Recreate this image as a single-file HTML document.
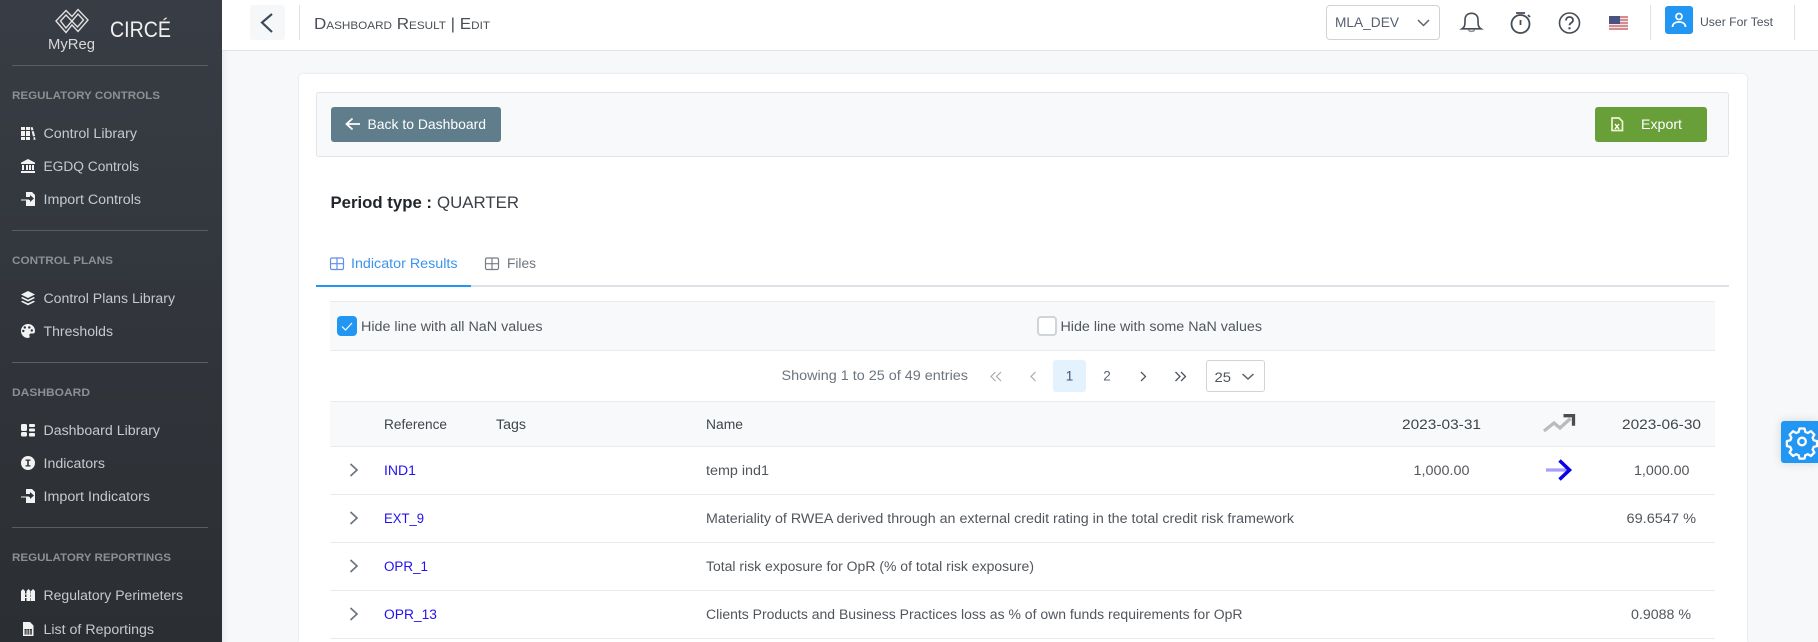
<!DOCTYPE html>
<html><head><meta charset="utf-8"><title>Dashboard Result</title>
<style>
html,body{margin:0;padding:0;width:1818px;height:642px;overflow:hidden;background:#f7f8fa}
#root{position:absolute;left:0;top:0;width:1818px;height:642px;overflow:hidden;background:#f7f8fa}
.a{position:absolute;box-sizing:border-box}
svg{position:absolute;left:0;top:0}
text{font-family:"Liberation Sans",sans-serif}
.s{fill:#c6c9cd;font-size:13.5px}
.h{fill:#8c8f94;font-size:11px;font-weight:bold}
.t{fill:#51565c;font-size:13.5px}
.d{fill:#3f454b;font-size:13.5px}
.l{fill:#2410ee;font-size:13.5px}
.w{fill:#fff;font-size:14px}
</style></head><body>
<div id="root">
<div class="a" style="left:0;top:0;width:222px;height:642px;background:linear-gradient(#383d45,#2b2e32)"></div>
<div class="a" style="left:222px;top:0;width:7px;height:642px;background:linear-gradient(90deg,#eceef1,#f7f8fa)"></div>
<div class="a" style="left:222px;top:0;width:1596px;height:51px;background:#fff;border-bottom:1px solid #dfe2e8"></div>
<div class="a" style="left:250px;top:5px;width:35px;height:35px;background:#f6f7f9;border-radius:3px"></div>
<div class="a" style="left:299px;top:5px;width:1px;height:35px;background:#dfe2e6"></div>
<div class="a" style="left:1326px;top:5px;width:114px;height:35px;border:1px solid #cfd2d6;border-radius:4px;background:#fff"></div>
<div class="a" style="left:1650px;top:5px;width:1px;height:35px;background:#dfe2e6"></div>
<div class="a" style="left:1794px;top:5px;width:1px;height:35px;background:#dfe2e6"></div>
<div class="a" style="left:1665px;top:6px;width:28px;height:28px;background:#2196f3;border-radius:3px"></div>

<div class="a" style="left:299px;top:74px;width:1448px;height:568px;background:#fff;border-radius:4px 4px 0 0;box-shadow:0 0 2px rgba(0,0,0,.12)"></div>
<div class="a" style="left:316px;top:92px;width:1413px;height:65px;background:#f8f9fa;border:1px solid #e1e4e8;border-radius:3px"></div>
<div class="a" style="left:331px;top:107px;width:170px;height:35px;background:#607d8b;border-radius:3px"></div>
<div class="a" style="left:1595px;top:107px;width:112px;height:35px;background:#689f38;border-radius:3px"></div>

<div class="a" style="left:316px;top:285px;width:1413px;height:2px;background:#dee2e6"></div>
<div class="a" style="left:316px;top:285px;width:155px;height:2px;background:#2196f3"></div>

<div class="a" style="left:330px;top:301px;width:1385px;height:50px;background:#f8f9fa;border-top:1px solid #e9ecef;border-bottom:1px solid #e9ecef"></div>
<div class="a" style="left:337px;top:316px;width:20px;height:20px;background:#2196f3;border-radius:4px"></div>
<div class="a" style="left:1037px;top:316px;width:20px;height:20px;background:#fff;border:2px solid #ced4da;border-radius:4px"></div>
<div class="a" style="left:1053px;top:360px;width:33px;height:32px;background:#e3f2fd;border-radius:3px"></div>
<div class="a" style="left:1206px;top:360px;width:59px;height:32px;background:#fff;border:1px solid #ced4da;border-radius:3px"></div>
<div class="a" style="left:330px;top:401px;width:1385px;height:46px;background:#f8f9fa;border-top:1px solid #e9ecef;border-bottom:1px solid #e9ecef"></div>
<div class="a" style="left:330px;top:494px;width:1385px;height:1px;background:#e9ecef"></div>
<div class="a" style="left:330px;top:542px;width:1385px;height:1px;background:#e9ecef"></div>
<div class="a" style="left:330px;top:590px;width:1385px;height:1px;background:#e9ecef"></div>
<div class="a" style="left:330px;top:638px;width:1385px;height:1px;background:#e9ecef"></div>
<div class="a" style="left:1781px;top:421px;width:37px;height:42px;background:#2196f3;border-radius:3px 0 0 3px;box-shadow:0 0 10px rgba(0,0,0,.14)"></div>

<svg width="1818" height="642" viewBox="0 0 1818 642" xmlns="http://www.w3.org/2000/svg">
<!-- sidebar logo -->
<g fill="none" stroke="#e0e0e0" stroke-width="1.400">
<path d="M56 21L66 10.500 72 16.500 78 9.500 88 20 78 31.500 72 25 66 32.500Z"/>
<path d="M60.500 21L66 15 77.500 27 83.500 20 78 14 66 28Z"/>
</g>
<text x="48" y="49" font-size="15" fill="#d8d8d8" textLength="47" lengthAdjust="spacingAndGlyphs">MyReg</text>
<text x="110" y="37" font-size="22" fill="#f0f0f0" textLength="61" lengthAdjust="spacingAndGlyphs">CIRCÉ</text>
<g stroke="#5a5e63" stroke-width="1"><path d="M12 65.500H208M12 230.500H208M12 362.500H208M12 527.500H208"/></g>

<text class="h" x="12" y="99" textLength="148" lengthAdjust="spacingAndGlyphs">REGULATORY CONTROLS</text>
<text class="h" x="12" y="264" textLength="101" lengthAdjust="spacingAndGlyphs">CONTROL PLANS</text>
<text class="h" x="12" y="396" textLength="78" lengthAdjust="spacingAndGlyphs">DASHBOARD</text>
<text class="h" x="12" y="561" textLength="159" lengthAdjust="spacingAndGlyphs">REGULATORY REPORTINGS</text>

<text class="s" x="43.500" y="138" textLength="93.500" lengthAdjust="spacingAndGlyphs">Control Library</text>
<text class="s" x="43.500" y="171" textLength="95.500" lengthAdjust="spacingAndGlyphs">EGDQ Controls</text>
<text class="s" x="43.500" y="204" textLength="97.500" lengthAdjust="spacingAndGlyphs">Import Controls</text>
<text class="s" x="43.500" y="303" textLength="131.500" lengthAdjust="spacingAndGlyphs">Control Plans Library</text>
<text class="s" x="43.500" y="336" textLength="69.500" lengthAdjust="spacingAndGlyphs">Thresholds</text>
<text class="s" x="43.500" y="435" textLength="116.500" lengthAdjust="spacingAndGlyphs">Dashboard Library</text>
<text class="s" x="43.500" y="468" textLength="61.500" lengthAdjust="spacingAndGlyphs">Indicators</text>
<text class="s" x="43.500" y="501" textLength="106.500" lengthAdjust="spacingAndGlyphs">Import Indicators</text>
<text class="s" x="43.500" y="600" textLength="139.500" lengthAdjust="spacingAndGlyphs">Regulatory Perimeters</text>
<text class="s" x="43.500" y="634" textLength="110.500" lengthAdjust="spacingAndGlyphs">List of Reportings</text>

<!-- sidebar icons -->
<g fill="#f2f2f2">
<!-- books -->
<path d="M21 127h4v3h-4zM21 131h4v5h-4zM21 137h4v3h-4zM26 127h4v3h-4zM26 131h4v5h-4zM26 137h4v3h-4zM30.500 127.500l2-.5 1 3-2 .5zM31.700 131.500l2-.5 1.300 5-2 .5zM33.500 137.500l1.500-.5.600 2.500-2 .5z"/>
<!-- bank -->
<path d="M28 159l7 3.600V164H21v-1.400zM22 165h2v5h-2zM26 165h2v5h-2zM29 165h2v5h-2zM32 165h2v5h-2zM21 171h14v2H21z"/>
<!-- import file -->
<path d="M26 192h6l3 3v11h-9v-6h4v2l4-3.500-4-3.500v2h-4z"/>
<path d="M21 199.500h8v1h-8z"/>
<!-- layers -->
<path d="M28 291l7 3.500-7 3.500-7-3.500zM22.500 297l5.500 2.700 5.500-2.700 1.500 1-7 3.500-7-3.500zM22.500 300.700l5.500 2.700 5.500-2.700 1.500 1-7 3.500-7-3.500z"/>
<!-- palette -->
<path fill-rule="evenodd" d="M28 324a7 7 0 1 0 0 14c1.500 0 2-1 1.500-2.200-.5-1.300.3-2.300 1.700-2.300H33c1.300 0 2-1 2-2.500 0-4-3-7-7-7zM24.500 331a1.200 1.200 0 1 1 0-.1zM26 327.500a1.200 1.200 0 1 1 0-.1zM30.500 327.500a1.200 1.200 0 1 1 0-.1zM33 330.500a1.200 1.200 0 1 1 0-.1z"/>
<!-- dashboard -->
<rect x="21" y="424" width="6" height="7" rx="1.500"/><rect x="21" y="432" width="6" height="4.500" rx="1.500"/>
<rect x="29" y="424" width="6" height="3" rx="1"/><rect x="29" y="428.500" width="6" height="3" rx="1"/><rect x="29" y="433" width="6" height="3.500" rx="1"/>
<!-- indicator -->
<path fill-rule="evenodd" d="M28 456a7 7 0 1 0 0 14 7 7 0 0 0 0-14zM25.500 459.500h5v1.200h-1.700v4.600h1.700v1.200h-5v-1.200h1.700v-4.600h-1.700z"/>
<!-- import file 2 -->
<path d="M26 489h6l3 3v11h-9v-6h4v2l4-3.500-4-3.500v2h-4z"/>
<path d="M21 496.500h8v1h-8z"/>
<!-- fence -->
<path d="M21 591l2-2 2 2v10h-4zM26.500 591l2-2 2 2v10h-4zM31 591l2-2 2 2v10h-4z"/>
<!-- reporting -->
<path fill-rule="evenodd" d="M23 622h7l3.500 3.500V636H23zM24.500 629v5.500h7.500V629z"/>
</g>
<path d="M25 594h6M25 597.500h6" stroke="#f2f2f2" stroke-width="1"/>
<path d="M24.500 631h7.500M24.500 633h7.500M27 629v5.500M29.500 629v5.500" stroke="#f2f2f2" stroke-width=".6"/>

<!-- header -->
<path d="M272 14L262 22.500 272 32" fill="none" stroke="#3d4b5c" stroke-width="2.200"/>
<text x="314" y="29" font-size="16" fill="#4a4f55" style="font-variant:small-caps" textLength="176" lengthAdjust="spacingAndGlyphs">Dashboard Result | Edit</text>
<text x="1335" y="27" font-size="14" fill="#566070" textLength="64" lengthAdjust="spacingAndGlyphs">MLA_DEV</text>
<path d="M1418 20l5.500 5.500 5.500-5.500" fill="none" stroke="#59626d" stroke-width="1.500"/>
<!-- bell -->
<g fill="none" stroke="#444c56" stroke-width="1.600">
<path d="M1462 28.800c3-1.800 3-4 3-9 0-4 2.500-6.500 6.500-6.500s6.500 2.500 6.500 6.500c0 5 0 7.200 3 9z"/>
<path d="M1468.500 29.500c.5 2.500 5.500 2.500 6 0" stroke="#8b9198"/>
</g>
<!-- timer -->
<g fill="none" stroke="#444c56" stroke-width="1.800">
<circle cx="1520.500" cy="24" r="9"/>
<path d="M1516 13h9M1520.500 20v5M1528 15l2 2"/>
</g>
<!-- help -->
<circle cx="1569.500" cy="23" r="10" fill="none" stroke="#444c56" stroke-width="1.600"/>
<path d="M1566 20.500c0-2.300 1.600-3.500 3.500-3.500s3.500 1.200 3.500 3.200c0 2.800-3.500 2.500-3.500 5" fill="none" stroke="#444c56" stroke-width="1.800"/>
<circle cx="1569.500" cy="28.300" r="1.200" fill="#444c56"/>
<!-- flag -->
<rect x="1609" y="16" width="19" height="14" fill="#efe9e9"/>
<path d="M1609 17h19M1609 20h19M1609 23h19M1609 26h19M1609 29h19" stroke="#c4565c" stroke-width="1.200"/>
<rect x="1609" y="16" width="11" height="8" fill="#4a5380"/>
<!-- user -->
<circle cx="1679" cy="16.500" r="3" fill="none" stroke="#fff" stroke-width="1.700"/>
<path d="M1672.500 27c0-3.500 3-5 6.500-5s6.500 1.500 6.500 5" fill="none" stroke="#fff" stroke-width="1.700"/>
<text x="1700" y="26" font-size="11.500" fill="#4c5560" textLength="73" lengthAdjust="spacingAndGlyphs">User For Test</text>

<!-- toolbar -->
<path d="M360 124h-13M352.500 118.500l-6 5.500 6 5.500" fill="none" stroke="#fff" stroke-width="1.800"/>
<text class="w" x="367.500" y="129" textLength="118.500" lengthAdjust="spacingAndGlyphs">Back to Dashboard</text>
<path d="M1612 118h7l3.500 3.500V130.500H1612z" fill="none" stroke="#f1f3d0" stroke-width="1.700"/>
<path d="M1615 124l4 5M1619 124l-4 5" stroke="#fff" stroke-width="1.400"/>
<text class="w" x="1641" y="129" textLength="41" lengthAdjust="spacingAndGlyphs">Export</text>

<!-- period -->
<text x="330.500" y="208" font-size="16.500" font-weight="bold" fill="#22262a" textLength="101.500" lengthAdjust="spacingAndGlyphs">Period type :</text>
<text x="437" y="208" font-size="16.500" fill="#3b4147" textLength="82" lengthAdjust="spacingAndGlyphs">QUARTER</text>

<!-- tabs -->
<g fill="none" stroke="#5f8fe8" stroke-width="1.200"><rect x="330.500" y="258" width="13" height="11.500" rx="1.500"/><path d="M337 258v11.500M330.500 263.700h13"/></g>
<text x="351" y="268" font-size="13.500" fill="#3b94ee" textLength="106.500" lengthAdjust="spacingAndGlyphs">Indicator Results</text>
<g fill="none" stroke="#777d85" stroke-width="1.200"><rect x="485.500" y="258" width="13" height="11.500" rx="1.500"/><path d="M492 258v11.500M485.500 263.700h13"/></g>
<text x="507" y="268" font-size="13.500" fill="#6c757d" textLength="29" lengthAdjust="spacingAndGlyphs">Files</text>

<!-- filters -->
<path d="M342 326.500l3.500 3.500 6.500-7" fill="none" stroke="#fff" stroke-width="1.200"/>
<text class="t" x="361" y="331" textLength="181.500" lengthAdjust="spacingAndGlyphs">Hide line with all NaN values</text>
<text class="t" x="1060.500" y="331" textLength="201.500" lengthAdjust="spacingAndGlyphs">Hide line with some NaN values</text>

<!-- pagination -->
<text x="781.500" y="380" font-size="13.500" fill="#6c757d" textLength="186.500" lengthAdjust="spacingAndGlyphs">Showing 1 to 25 of 49 entries</text>
<path d="M995.500 372l-4.500 4.500 4.500 4.500M1001 372l-4.500 4.500 4.500 4.500M1035.500 372l-4.500 4.500 4.500 4.500" fill="none" stroke="#a5abb2" stroke-width="1.200"/>
<text x="1069.500" y="380.500" font-size="13.500" fill="#4b4f7a" text-anchor="middle">1</text>
<text x="1107" y="380.500" font-size="13.500" fill="#5c646c" text-anchor="middle">2</text>
<path d="M1141 372l4.500 4.500-4.500 4.500M1175.500 372l4.500 4.500-4.500 4.500M1181 372l4.500 4.500-4.500 4.500" fill="none" stroke="#4c545c" stroke-width="1.300"/>
<text x="1214.500" y="382" font-size="13.500" fill="#51565c" textLength="16.500" lengthAdjust="spacingAndGlyphs">25</text>
<path d="M1242.500 374l5.500 5 5.500-5" fill="none" stroke="#59626d" stroke-width="1.500"/>

<!-- table head -->
<text class="d" x="384" y="429" textLength="63" lengthAdjust="spacingAndGlyphs">Reference</text>
<text class="d" x="496" y="429" textLength="30" lengthAdjust="spacingAndGlyphs">Tags</text>
<text class="d" x="706" y="429" textLength="37" lengthAdjust="spacingAndGlyphs">Name</text>
<text class="d" x="1402" y="429" textLength="79" lengthAdjust="spacingAndGlyphs">2023-03-31</text>
<text class="d" x="1622" y="429" textLength="79" lengthAdjust="spacingAndGlyphs">2023-06-30</text>
<path d="M1544 431l10-8 6 5 10.500-9.500" fill="none" stroke="#b9bbbd" stroke-width="3.300"/>
<path d="M1563.500 415.700h10v10" fill="none" stroke="#4a4e53" stroke-width="3.300"/>

<!-- rows -->
<g fill="none" stroke="#6d747b" stroke-width="1.700">
<path d="M350.500 464l6.500 6-6.500 6M350.500 512l6.500 6-6.500 6M350.500 560l6.500 6-6.500 6M350.500 608l6.500 6-6.500 6"/>
</g>
<text class="l" x="384" y="475" textLength="32" lengthAdjust="spacingAndGlyphs">IND1</text>
<text class="l" x="384" y="523" textLength="40" lengthAdjust="spacingAndGlyphs">EXT_9</text>
<text class="l" x="384" y="571" textLength="44" lengthAdjust="spacingAndGlyphs">OPR_1</text>
<text class="l" x="384" y="619" textLength="53" lengthAdjust="spacingAndGlyphs">OPR_13</text>
<text class="t" x="706" y="475" textLength="63" lengthAdjust="spacingAndGlyphs">temp ind1</text>
<text class="t" x="706" y="523" textLength="588" lengthAdjust="spacingAndGlyphs">Materiality of RWEA derived through an external credit rating in the total credit risk framework</text>
<text class="t" x="706" y="571" textLength="328" lengthAdjust="spacingAndGlyphs">Total risk exposure for OpR (% of total risk exposure)</text>
<text class="t" x="706" y="619" textLength="536.500" lengthAdjust="spacingAndGlyphs">Clients Products and Business Practices loss as % of own funds requirements for OpR</text>
<text class="t" x="1413.500" y="475" textLength="56" lengthAdjust="spacingAndGlyphs">1,000.00</text>
<text class="t" x="1634" y="475" textLength="55.500" lengthAdjust="spacingAndGlyphs">1,000.00</text>
<text class="t" x="1626.500" y="523" textLength="69.500" lengthAdjust="spacingAndGlyphs">69.6547 %</text>
<text class="t" x="1631" y="619" textLength="60" lengthAdjust="spacingAndGlyphs">0.9088 %</text>
<path d="M1546 470h22" stroke="#a5a0fb" stroke-width="3.300"/>
<path d="M1559.500 460.500l10 9.500-10 9.500" fill="none" stroke="#0a00ea" stroke-width="3.500"/>

<!-- gear -->
<g fill="none" stroke="#fff" stroke-width="2.300" stroke-linejoin="round">
<path d="M1799.500 429h5l.8 3.400 2.600 1.100 3-1.800 3.500 3.500-1.800 3 1.100 2.600 3.300.8v5l-3.300.8-1.100 2.600 1.800 3-3.500 3.500-3-1.800-2.600 1.100-.8 3.300h-5l-.8-3.300-2.600-1.100-3 1.800-3.500-3.500 1.800-3-1.100-2.600-3.400-.8v-5l3.400-.8 1.100-2.600-1.800-3 3.500-3.500 3 1.800 2.600-1.100z" transform="translate(0,-.500)"/>
<circle cx="1802" cy="441.500" r="3.800"/>
</g>
</svg>
</div>
</body></html>
